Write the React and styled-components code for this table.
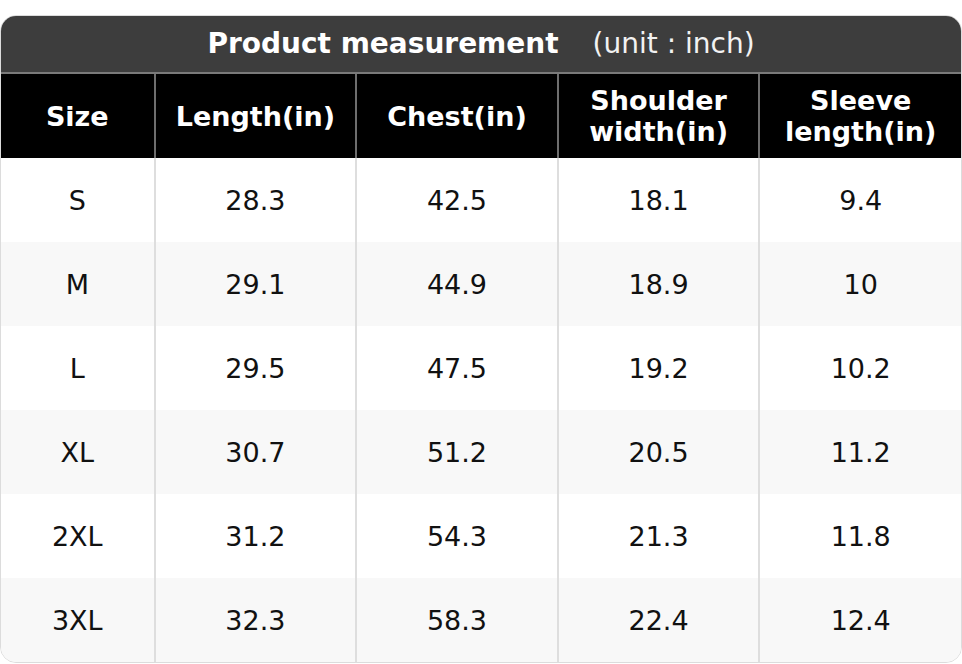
import React from "react";
import styled, { createGlobalStyle } from "styled-components";

const GlobalStyle = createGlobalStyle`
  html, body {
    margin: 0;
    padding: 0;
    background: #ffffff;
  }
  body {
    font-family: "DejaVu Sans", "Noto Sans", sans-serif;
  }
`;

const Page = styled.div`
  padding: 15px 0 0 0;
  width: 962px;
  box-sizing: border-box;
`;

const Card = styled.div`
  border: 1px solid #dcdcdc;
  border-radius: 16px;
  overflow: hidden;
  background: #ffffff;
`;

const TitleBar = styled.div`
  height: 54px;
  padding-bottom: 2px;
  background: #3d3d3d;
  border-bottom: 2px solid #7a7a7a;
  display: flex;
  align-items: center;
  justify-content: center;
  gap: 34px;
  color: #ffffff;
  font-size: 28px;
`;

const TitleMain = styled.span`
  font-weight: bold;
`;

const TitleUnit = styled.span`
  font-weight: normal;
  color: #f2f2f2;
`;

const Table = styled.table`
  width: 100%;
  border-collapse: collapse;
  table-layout: fixed;
`;

const Col = styled.col`
  width: ${(p) => p.$w};
`;

const HeadCell = styled.th`
  height: 84px;
  padding: 0 8px;
  box-sizing: border-box;
  background: #000000;
  color: #ffffff;
  font-weight: bold;
  font-size: 27px;
  line-height: 31px;
  text-align: center;
  vertical-align: middle;
  border-right: 2px solid #6e6e6e;
  &:last-child {
    border-right: none;
  }
`;

const Row = styled.tr`
  background: ${(p) => (p.$alt ? "#f8f8f8" : "#ffffff")};
`;

const Cell = styled.td`
  height: 84px;
  padding: 0;
  box-sizing: border-box;
  color: #111111;
  font-size: 27px;
  text-align: center;
  vertical-align: middle;
  border-right: 2px solid #dedede;
  &:last-child {
    border-right: none;
  }
`;

const headers = ["Size", "Length(in)", "Chest(in)", "Shoulder width(in)", "Sleeve length(in)"];
const widths = ["16%", "21%", "21%", "21%", "21%"];

const rows = [
  ["S", "28.3", "42.5", "18.1", "9.4"],
  ["M", "29.1", "44.9", "18.9", "10"],
  ["L", "29.5", "47.5", "19.2", "10.2"],
  ["XL", "30.7", "51.2", "20.5", "11.2"],
  ["2XL", "31.2", "54.3", "21.3", "11.8"],
  ["3XL", "32.3", "58.3", "22.4", "12.4"],
];

export default function App() {
  return (
    <>
      <GlobalStyle />
      <Page>
        <Card>
          <TitleBar>
            <TitleMain>Product measurement</TitleMain>
            <TitleUnit>(unit : inch)</TitleUnit>
          </TitleBar>
          <Table>
            <colgroup>
              {widths.map((w, i) => (
                <Col key={i} $w={w} />
              ))}
            </colgroup>
            <thead>
              <tr>
                {headers.map((h) => (
                  <HeadCell key={h}>{h}</HeadCell>
                ))}
              </tr>
            </thead>
            <tbody>
              {rows.map((r, i) => (
                <Row key={r[0]} $alt={i % 2 === 1}>
                  {r.map((v, j) => (
                    <Cell key={j}>{v}</Cell>
                  ))}
                </Row>
              ))}
            </tbody>
          </Table>
        </Card>
      </Page>
    </>
  );
}
